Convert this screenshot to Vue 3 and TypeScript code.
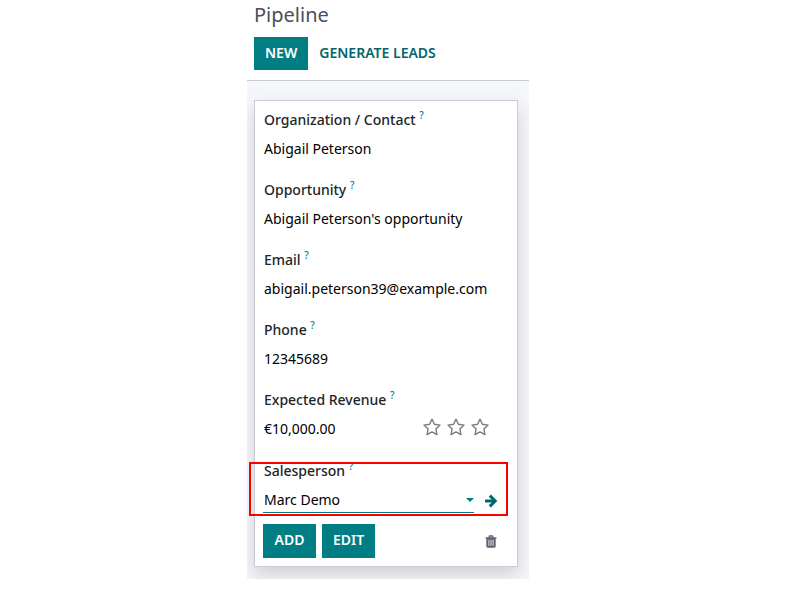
<script setup lang="ts">
import { ref } from 'vue'

interface Field {
  id: string
  label: string
  type: string
  value: string
}

const fields = ref<Field[]>([
  { id: 'contact', label: 'Organization / Contact', type: 'text', value: 'Abigail Peterson' },
  { id: 'opportunity', label: 'Opportunity', type: 'text', value: "Abigail Peterson's opportunity" },
  { id: 'email', label: 'Email', type: 'email', value: 'abigail.peterson39@example.com' },
  { id: 'phone', label: 'Phone', type: 'tel', value: '12345689' },
  { id: 'revenue', label: 'Expected Revenue', type: 'text', value: '€10,000.00' },
])
const salesperson = ref('Marc Demo')
const priorities: string[] = ['Medium', 'High', 'Very High']
</script>

<template>
  <div class="page">
    <main class="pipeline">
      <header class="control-panel">
        <h1>Pipeline</h1>
        <div class="actions">
          <button type="button" class="btn primary">NEW</button>
          <button type="button" class="btn link">GENERATE LEADS</button>
        </div>
      </header>
      <section class="board">
        <form class="card" @submit.prevent>
          <div v-for="field in fields" :key="field.id" class="field">
            <label :for="field.id">{{ field.label }} <sup>?</sup></label>
            <div class="value">
              <input :id="field.id" v-model="field.value" :type="field.type" />
              <div v-if="field.id === 'revenue'" class="stars">
                <button v-for="level in priorities" :key="level" type="button" :aria-label="level">
                  <svg viewBox="0 0 18 18" width="18" height="18">
                    <path d="M9 1.2 L11.4 6.3 L17 7.1 L12.9 11 L13.9 16.6 L9 13.9 L4.1 16.6 L5.1 11 L1 7.1 L6.6 6.3 Z" />
                  </svg>
                </button>
              </div>
            </div>
          </div>
          <div class="field highlighted">
            <label for="salesperson">Salesperson <sup>?</sup></label>
            <div class="value">
              <div class="picker">
                <select id="salesperson" v-model="salesperson">
                  <option>Marc Demo</option>
                </select>
                <svg class="caret" viewBox="0 0 8 4" width="8" height="4"><path d="M0 0H8L4 4Z" /></svg>
              </div>
              <button type="button" class="open" aria-label="Open salesperson">
                <svg viewBox="0 0 14 14" width="14" height="14">
                  <path d="M1 7H11" />
                  <path d="M5.8 1.6L11.2 7L5.8 12.4" />
                </svg>
              </button>
            </div>
          </div>
          <footer>
            <button type="submit" class="btn primary">ADD</button>
            <button type="button" class="btn primary">EDIT</button>
            <button type="button" class="trash" aria-label="Discard">
              <svg viewBox="0 0 12 13" width="12" height="13">
                <path class="lid" d="M0.5 2.9H11.5M3.9 2.8L4.5 1H7.5L8.1 2.8" />
                <path class="can" d="M1.3 3H10.7V11Q10.7 12.7 9.3 12.7H2.7Q1.3 12.7 1.3 11Z" />
                <path class="slots" d="M3.9 4.8V10.8M6 4.8V10.8M8.1 4.8V10.8" />
              </svg>
            </button>
          </footer>
        </form>
      </section>
    </main>
  </div>
</template>

<style>
body {
  background: #fff;
}
</style>

<style scoped>
.page {
  display: grid;
  grid-template-columns: 247fr 282fr 271fr;
  font-family: "Noto Sans", "Open Sans", sans-serif;
  font-size: 14px;
  line-height: 24px;
  color: #000;
}
.page * {
  box-sizing: border-box;
}
.pipeline {
  grid-column: 2;
  min-width: 0;
}
.control-panel {
  padding: 3px 7px 10px;
  border-bottom: 1px solid #c9ccd2;
}
h1 {
  margin: 0 0 10px;
  font-size: 20px;
  font-weight: 400;
  line-height: 24px;
  color: #495057;
}
.actions {
  display: flex;
}
button {
  padding: 0;
  border: 0;
  background: none;
  font: inherit;
  cursor: pointer;
}
.btn {
  height: 33px;
  padding: 0 11px 2px;
  font-weight: 600;
  white-space: nowrap;
}
.primary {
  min-width: 53px;
  background: #017e84;
  color: #fff;
}
.link {
  color: #01666b;
}
.board {
  padding: 19px 11px 12px 7px;
  background: #f5f6fa;
  overflow: hidden;
}
.card {
  padding: 7px 8px 8px;
  border: 1px solid #c9ccd2;
  background: #fff;
  box-shadow: 0 8px 16px rgba(0, 0, 0, 0.15);
}
.field {
  position: relative;
  margin-bottom: 17px;
  padding: 0 1px;
}
label {
  display: block;
  height: 24px;
  margin-bottom: 5px;
  font-weight: 500;
  color: #212529;
}
sup {
  font-size: 10px;
  line-height: 0;
  color: #0180a5;
}
.value {
  display: flex;
  align-items: flex-start;
}
input,
select {
  flex: 1;
  width: 100%;
  min-width: 0;
  height: 24px;
  padding: 0;
  border: 0;
  outline: 0;
  background: none;
  font: inherit;
  color: inherit;
}
select {
  appearance: none;
}
.stars {
  display: flex;
  gap: 6px;
  height: 25px;
  margin-right: 19px;
}
.stars button {
  width: 18px;
  height: 20px;
}
.stars svg {
  display: block;
  fill: none;
  stroke: #74797f;
  stroke-width: 1.4;
  stroke-linejoin: round;
}
.highlighted {
  margin-bottom: 11px;
  padding-left: 0;
}
.highlighted .value {
  align-items: center;
}
.highlighted label,
.highlighted select {
  padding-left: 1px;
}
.highlighted::after {
  content: "";
  position: absolute;
  inset: 3px 1px -3px -14px;
  border: 2px solid #f00;
  pointer-events: none;
}
.picker {
  display: flex;
  flex: 1;
  align-items: center;
  border-bottom: 1px solid #017e84;
}
.caret {
  fill: #017e84;
}
.open {
  width: 14px;
  height: 14px;
  margin: 0 10px;
}
.open svg,
.trash svg {
  display: block;
}
.open path {
  fill: none;
  stroke: #01666b;
  stroke-width: 3;
}
footer {
  display: flex;
  align-items: center;
  gap: 6px;
}
footer .btn {
  height: 34px;
}
.trash {
  margin: 0 12px 0 auto;
}
.lid {
  fill: none;
  stroke: #5f636f;
  stroke-width: 1.3;
}
.can {
  fill: #5f636f;
}
.slots {
  stroke: #fff;
  stroke-width: 0.8;
}
</style>
